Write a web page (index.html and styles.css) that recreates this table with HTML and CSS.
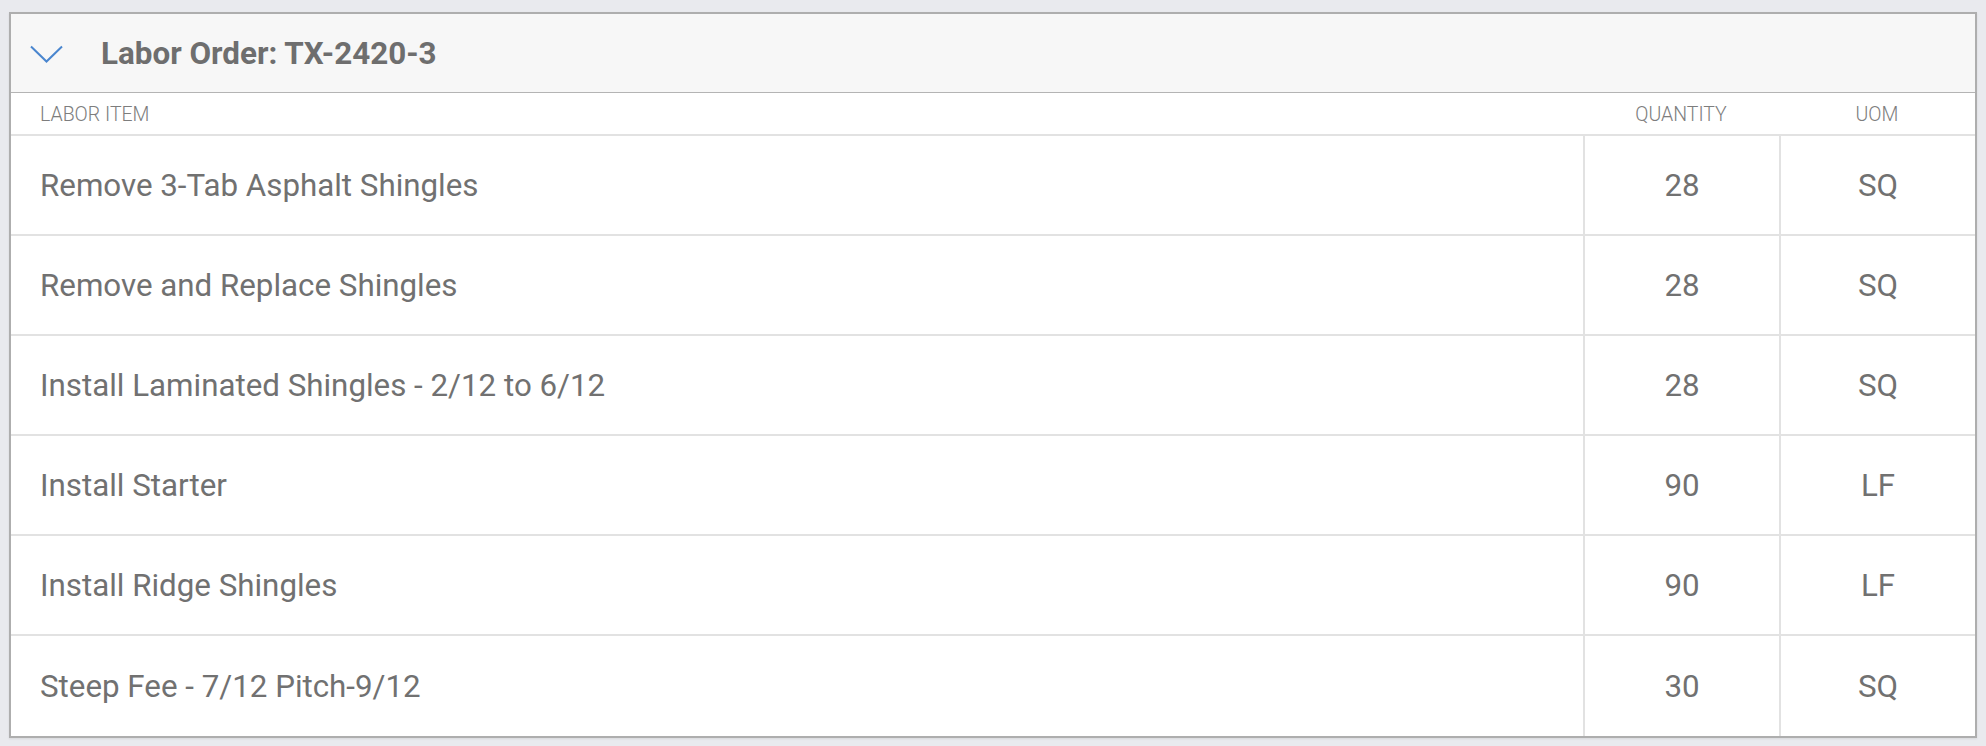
FILE: index.html
```html
<!DOCTYPE html>
<html lang="en">
<head>
<meta charset="utf-8">
<title>Labor Order</title>
<link rel="stylesheet" href="styles.css">
</head>
<body>
<section class="card">
  <header class="card-header">
    <svg class="chevron" width="33" height="18" viewBox="0 0 33 18" aria-hidden="true">
      <polyline points="1,1.5 16.5,16.5 32,1.5" fill="none" stroke="#4a86cf" stroke-width="2"/>
    </svg>
    <h2 class="title">Labor Order: TX-2420-3</h2>
  </header>
  <div class="table">
    <div class="row head">
      <div class="cell item">LABOR ITEM</div>
      <div class="cell num">QUANTITY</div>
      <div class="cell num">UOM</div>
    </div>
    <div class="row body">
      <div class="cell item">Remove 3-Tab Asphalt Shingles</div>
      <div class="cell num">28</div>
      <div class="cell num">SQ</div>
    </div>
    <div class="row body">
      <div class="cell item">Remove and Replace Shingles</div>
      <div class="cell num">28</div>
      <div class="cell num">SQ</div>
    </div>
    <div class="row body">
      <div class="cell item">Install Laminated Shingles - 2/12 to 6/12</div>
      <div class="cell num">28</div>
      <div class="cell num">SQ</div>
    </div>
    <div class="row body">
      <div class="cell item">Install Starter</div>
      <div class="cell num">90</div>
      <div class="cell num">LF</div>
    </div>
    <div class="row body">
      <div class="cell item">Install Ridge Shingles</div>
      <div class="cell num">90</div>
      <div class="cell num">LF</div>
    </div>
    <div class="row body">
      <div class="cell item">Steep Fee - 7/12 Pitch-9/12</div>
      <div class="cell num">30</div>
      <div class="cell num">SQ</div>
    </div>
  </div>
</section>
</body>
</html>
```

FILE: styles.css
```css
* { box-sizing: border-box; }

html, body {
  margin: 0;
  padding: 0;
  background: #e9eaee;
  font-family: Roboto, "Liberation Sans", Arial, sans-serif;
}

body {
  padding: 12px 9px 8px 9px;
}

.card {
  background: #ffffff;
  border: 2px solid #aeaeae;
  box-shadow: 0 1px 2px rgba(0,0,0,0.08);
}

.card-header {
  height: 79px;
  display: flex;
  align-items: center;
  padding-left: 19px;
  gap: 38px;
  background: #f7f7f7;
  border-bottom: 1px solid #b4b4b4;
}

.chevron {
  display: block;
  margin-top: 2px;
}

.title {
  margin: 0;
  font-size: 31.4px;
  font-weight: 700;
  color: #6e6e6e;
}

.row {
  display: grid;
  grid-template-columns: 1fr 196px 196px;
}

.row.head {
  height: 43px;
  border-bottom: 2px solid #e2e2e2;
  font-size: 19.5px;
  font-weight: 300;
  color: #7d7d7d;
}

.row.body {
  height: 100px;
  border-bottom: 2px solid #e2e2e2;
  font-size: 31.3px;
  color: #717171;
}

.row.body:last-child {
  border-bottom: none;
}

.cell {
  display: flex;
  align-items: center;
}

.cell.item {
  padding-left: 29px;
}

.cell.num {
  justify-content: center;
}

.row.body .cell.num {
  border-left: 2px solid #e2e2e2;
}

.row.head .cell {
  padding-top: 2px;
}
```
